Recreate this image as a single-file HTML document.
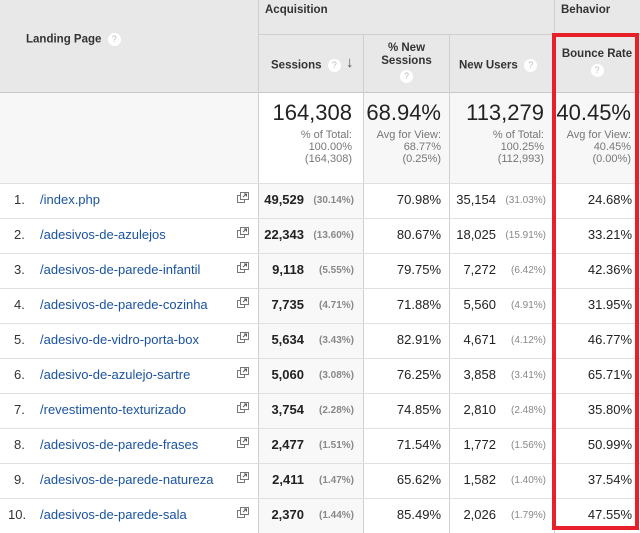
<!DOCTYPE html>
<html><head><style>
*{margin:0;padding:0;box-sizing:border-box}
body{width:640px;height:533px;overflow:hidden;background:#fff;font-family:"Liberation Sans",Arial,sans-serif;position:relative;color:#222}
.a{position:absolute}
.h{font-weight:bold;font-size:11.5px;color:#333}
.q{display:inline-block;width:13px;height:13px;border-radius:50%;background:#fff;color:#bbb;font-size:9px;text-align:center;line-height:13px;font-weight:normal;vertical-align:middle}
.vl{position:absolute;width:1px;background:#d0d0d0}
.hl{position:absolute;height:1px;background:#e0e0e0;left:0;width:640px}
.big{font-size:22px;color:#222;text-align:right}
.sm{font-size:11px;color:#777;text-align:right;line-height:12px}
.row{position:absolute;left:0;width:640px;height:35px;font-size:13px}
.row div{position:absolute;top:9px;white-space:nowrap}
.n{left:14px;color:#333}
.lk{left:40px;color:#1a53a0}
.ic{left:237px;top:9px!important;width:12px;height:12px}
.p{font-size:10px;color:#888;font-weight:bold}
.pp{font-size:10px;color:#888}
</style></head><body>
<div class="a" style="left:0;top:0;width:640px;height:92px;background:#e8e8e8"></div>
<div class="a" style="left:0;top:93px;width:640px;height:90px;background:#f7f7f7"></div>
<div class="a" style="left:259px;top:93px;width:104px;height:90px;background:#fff"></div>
<div class="a" style="left:259px;top:183px;width:104px;height:350px;background:#f8f8f8"></div>
<div class="a" style="left:259px;top:34px;width:381px;height:1px;background:#d0d0d0"></div>
<div class="a" style="left:0;top:92px;width:640px;height:1px;background:#c8c8c8"></div>
<div class="vl" style="left:258px;top:0;height:533px"></div>
<div class="vl" style="left:363px;top:35px;height:498px"></div>
<div class="vl" style="left:449px;top:35px;height:498px"></div>
<div class="vl" style="left:554px;top:0;height:533px"></div>
<div class="a h" style="left:26px;top:33px">Landing Page &nbsp;<span class="q">?</span></div>
<div class="a h" style="left:265px;top:4px">Acquisition</div>
<div class="a h" style="left:561px;top:4px">Behavior</div>
<div class="a h" style="left:271px;top:59px">Sessions &nbsp;<span class="q">?</span></div>
<div class="a" style="left:346px;top:54px;font-size:15px;color:#555;font-weight:bold">&#8595;</div>
<div class="a h" style="left:364px;top:42px;width:85px;text-align:center;line-height:12.5px">% New<br>Sessions<br><span class="q" style="margin-top:3px">?</span></div>
<div class="a h" style="left:459px;top:59px">New Users &nbsp;<span class="q">?</span></div>
<div class="a h" style="left:555px;top:48px;width:84px;text-align:center">Bounce Rate<br><span class="q" style="margin-top:4px">?</span></div>
<div class="a" style="left:259px;top:100px;width:93px"><div class="big">164,308</div><div class="sm" style="margin-top:3px">% of Total:<br>100.00%<br>(164,308)</div></div>
<div class="a" style="left:364px;top:100px;width:77px"><div class="big">68.94%</div><div class="sm" style="margin-top:3px">Avg for View:<br>68.77%<br>(0.25%)</div></div>
<div class="a" style="left:450px;top:100px;width:94px"><div class="big">113,279</div><div class="sm" style="margin-top:3px">% of Total:<br>100.25%<br>(112,993)</div></div>
<div class="a" style="left:555px;top:100px;width:76px"><div class="big">40.45%</div><div class="sm" style="margin-top:3px">Avg for View:<br>40.45%<br>(0.00%)</div></div>
<div id="rows"></div>
<script>
var d=[["/index.php","49,529","(30.14%)","70.98%","35,154","(31.03%)","24.68%"],
["/adesivos-de-azulejos","22,343","(13.60%)","80.67%","18,025","(15.91%)","33.21%"],
["/adesivos-de-parede-infantil","9,118","(5.55%)","79.75%","7,272","(6.42%)","42.36%"],
["/adesivos-de-parede-cozinha","7,735","(4.71%)","71.88%","5,560","(4.91%)","31.95%"],
["/adesivo-de-vidro-porta-box","5,634","(3.43%)","82.91%","4,671","(4.12%)","46.77%"],
["/adesivo-de-azulejo-sartre","5,060","(3.08%)","76.25%","3,858","(3.41%)","65.71%"],
["/revestimento-texturizado","3,754","(2.28%)","74.85%","2,810","(2.48%)","35.80%"],
["/adesivos-de-parede-frases","2,477","(1.51%)","71.54%","1,772","(1.56%)","50.99%"],
["/adesivos-de-parede-natureza","2,411","(1.47%)","65.62%","1,582","(1.40%)","37.54%"],
["/adesivos-de-parede-sala","2,370","(1.44%)","85.49%","2,026","(1.79%)","47.55%"]];
var h="";
d.forEach(function(r,i){var t=183+35*i;
h+='<div class="hl" style="top:'+t+'px"></div><div class="row" style="top:'+t+'px">'+
'<div class="n" style="left:'+(i==9?8:14)+'px">'+(i+1)+'.</div><div class="lk">'+r[0]+'</div>'+
'<div class="ic"><svg width="12" height="12" viewBox="0 0 12 12"><rect x="0.5" y="3.5" width="7" height="7" fill="#fff" stroke="#777"/><rect x="3.5" y="0.5" width="8" height="7" fill="#fff" stroke="#777"/><path d="M6 5L9.5 2M7 2h2.5v2.5" stroke="#555" fill="none"/></svg></div>'+
'<div style="right:336px;font-weight:bold">'+r[1]+'</div><div class="p" style="right:286px;top:12px">'+r[2]+'</div>'+
'<div style="right:199px">'+r[3]+'</div>'+
'<div style="right:144px">'+r[4]+'</div><div class="pp" style="right:94px;top:12px">'+r[5]+'</div>'+
'<div style="right:8px">'+r[6]+'</div></div>';});
document.getElementById("rows").innerHTML=h;
</script>
<div class="a" style="left:552px;top:33px;width:87px;height:497px;border:4px solid #e8202a"></div>
</body></html>
